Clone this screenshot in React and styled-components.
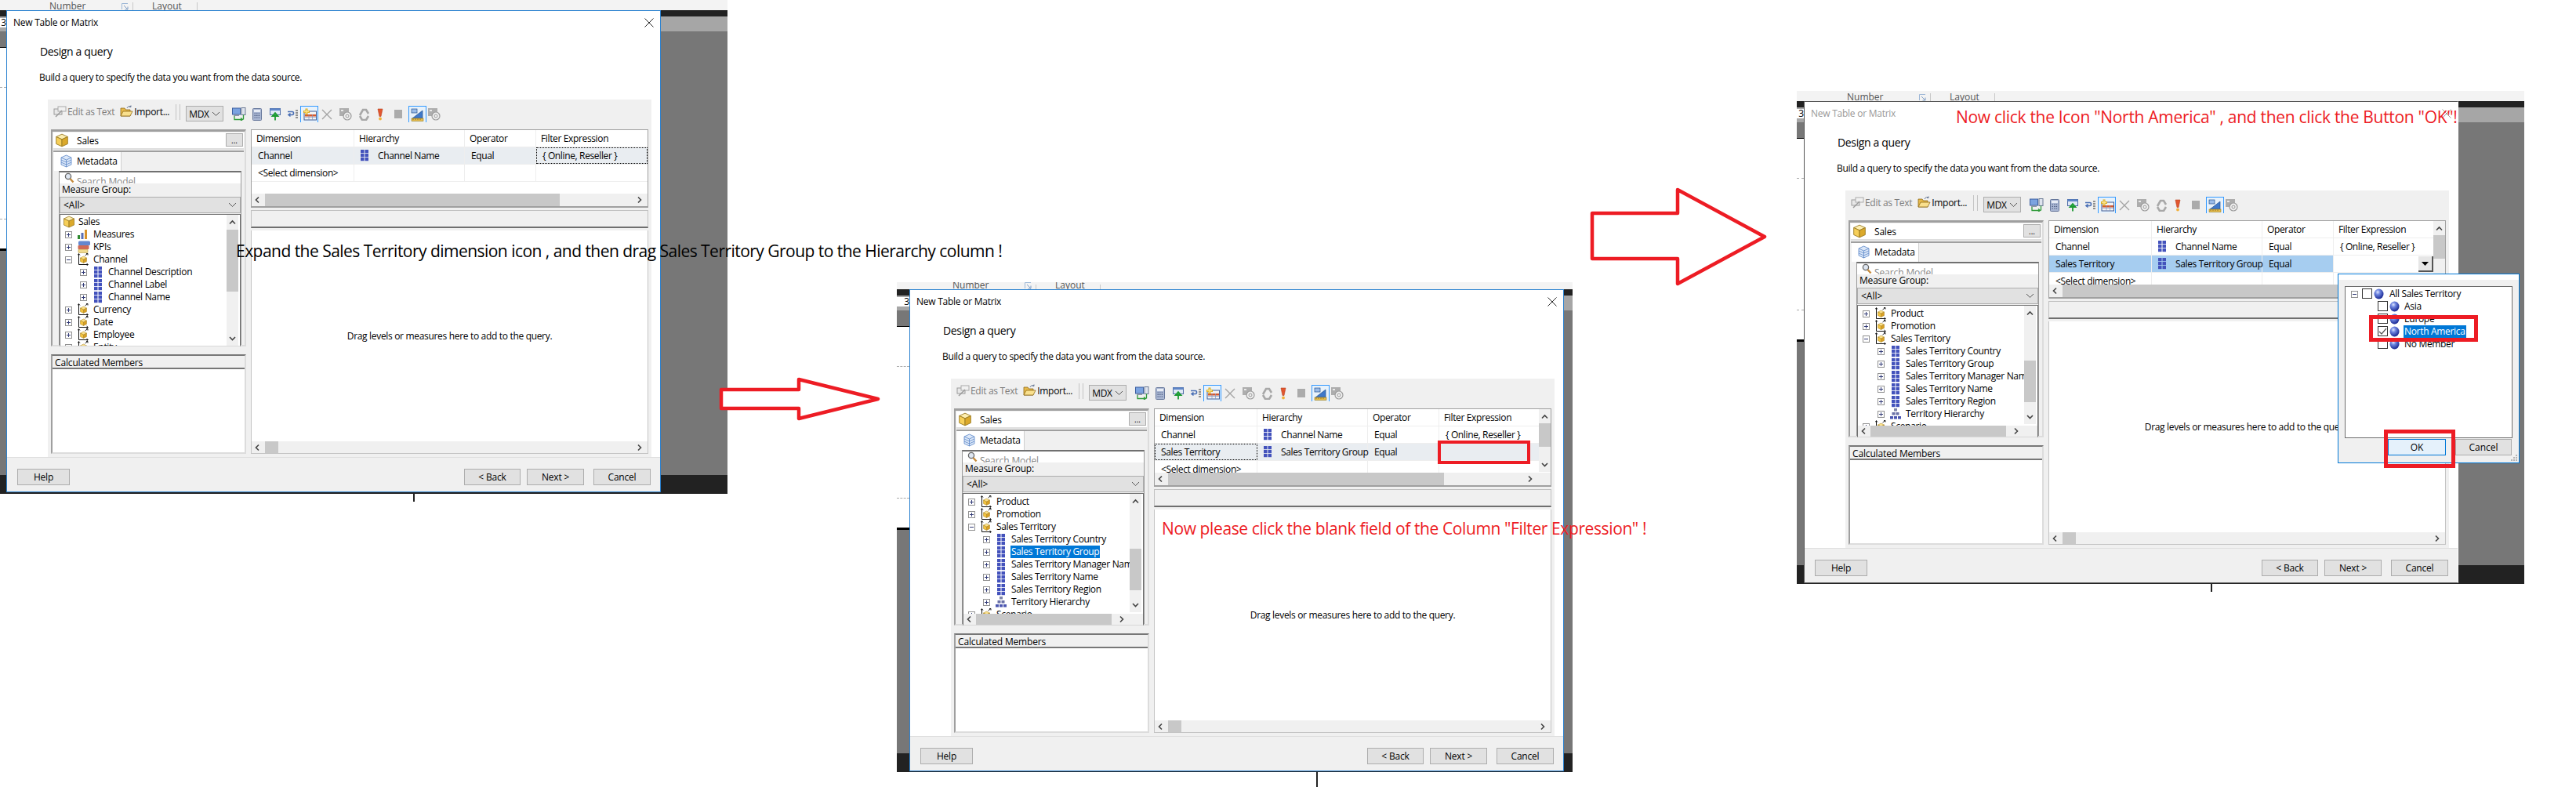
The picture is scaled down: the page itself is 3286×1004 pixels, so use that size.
import React, { useId } from 'react';
import styled, { createGlobalStyle } from 'styled-components';

const Global = createGlobalStyle`
  html, body { margin: 0; padding: 0; background: #fff; }
  body { font-family: "Open Sans", "Noto Sans", sans-serif; font-size: 12px; color: #000; }
`;

const Page = styled.div`
  position: relative;
  width: 3286px;
  height: 1004px;
  overflow: hidden;
  background: #fff;
`;

/* ---------- backdrop of each pasted screenshot ---------- */
const Shot = styled.section`
  position: absolute;
  left: ${p => p.$x}px;
  top: ${p => p.$y}px;
  width: ${p => p.$w}px;
  height: ${p => p.$h}px;
  display: flex;
  flex-direction: column;
`;
const Ribbon = styled.div`
  height: ${p => p.$h}px;
  flex: none;
  background: #f3f3f3;
  display: flex;
  align-items: flex-end;
  overflow: hidden;
  padding-left: ${p => p.$pad}px;
  font-size: 12px;
  line-height: 17px;
  color: #555;
`;
const RibbonCell = styled.div`
  position: relative;
  width: ${p => p.$w}px;
  height: 100%;
  flex: none;
  border-right: 1px solid #c8c8c8;
  box-sizing: border-box;
  padding-left: ${p => p.$pad}px;
  display: flex;
  align-items: flex-end;
  margin-bottom: -3px;
`;
const Launcher = styled.span`
  position: absolute;
  right: 5px;
  bottom: 3px;
  line-height: 0;
`;
const Workspace = styled.div`
  flex: 1;
  display: flex;
  flex-direction: column;
`;
const Band = styled.div`
  height: ${p => p.$h}px;
  flex: ${p => (p.$h ? 'none' : 1)};
  background: ${p => p.$c};
`;
const Stub = styled.div`
  position: absolute;
  left: 0;
  width: ${p => p.$w}px;
  top: ${p => p.$top}px;
  height: 260px;
  background: #fff;
  border-top: 1px solid #000;
  border-bottom: 3px solid #000;
  box-sizing: border-box;
  &::before, &::after {
    content: '';
    position: absolute;
    left: 0;
    right: 0;
    border-top: 1px dashed #aaa;
  }
  &::before { top: 50px; }
  &::after { top: 218px; }
`;
const SheetTab = styled.div`
  position: absolute;
  left: 0;
  top: ${p => p.$top}px;
  width: ${p => p.$w}px;
  height: 12px;
  background: #fff;
  overflow: hidden;
  display: flex;
  justify-content: flex-end;
  font-size: 12px;
  line-height: 12px;
`;
const Tail = styled.div`
  position: absolute;
  top: 100%;
  left: ${p => p.$x}px;
  width: 2px;
  height: ${p => p.$h}px;
  background: #222;
`;

/* ---------- dialog ---------- */
const Dialog = styled.div`
  position: absolute;
  left: ${p => p.$x}px;
  top: ${p => p.$y}px;
  width: 835px;
  height: 615px;
  box-sizing: border-box;
  background: #fff;
  border: 1px solid ${p => (p.$active ? '#2b82d0' : '#555')};
  border-right-color: ${p => (p.$active ? '#2b82d0' : '#fff')};
  display: flex;
  flex-direction: column;
`;
const TitleBar = styled.div`
  height: 29px;
  flex: none;
  display: flex;
  align-items: center;
  justify-content: space-between;
  padding: 0 8px 0 8px;
  color: ${p => (p.$active ? '#000' : '#999')};
`;
const Title = styled.span`
  letter-spacing: -0.25px;
`;
const Heading = styled.div`
  height: 84px;
  flex: none;
  padding-left: 42px;
  display: flex;
  flex-direction: column;
`;
const DesignTitle = styled.div`
  font-size: 14px;
  line-height: 20px;
  margin-top: 13px;
  letter-spacing: -0.35px;
`;
const DesignSub = styled.div`
  margin-top: 15px;
  line-height: 16px;
  margin-left: -1px;
  letter-spacing: -0.36px;
`;
const Panel = styled.div`
  height: 456px;
  flex: none;
  margin: 0 11px 0 52px;
  background: #f0f0f0;
  padding: 0 4px;
  box-sizing: border-box;
  display: flex;
  flex-direction: column;
`;
const Toolbar = styled.div`
  height: 38px;
  flex: none;
  display: flex;
  align-items: flex-start;
  position: relative;
  font-size: 12px;
`;
const TbText = styled.div`
  display: flex;
  align-items: center;
  gap: 1px;
  height: 18px;
  margin-top: 6px;
  color: ${p => (p.$off ? '#7d7d7d' : '#000')};
  margin-left: ${p => p.$ml || 0}px;
  letter-spacing: -0.3px;
`;
const TbSep = styled.div`
  width: 4px;
  height: 20px;
  margin: 6px 7px 0 8px;
  border-left: 1px solid #c4c4c4;
  border-right: 1px solid #c4c4c4;
`;
const MdxCombo = styled.div`
  width: 48px;
  height: 20px;
  margin-top: 8px;
  background: #e1e1e1;
  border: 1px solid #adadad;
  box-sizing: border-box;
  display: flex;
  align-items: center;
  justify-content: space-between;
  padding: 0 3px 0 3px;
  letter-spacing: -0.3px;
`;
const TbIcons = styled.div`
  display: flex;
  align-items: flex-start;
  margin-left: 8px;
  margin-top: 8px;
`;
const TbBtn = styled.div`
  width: ${p => p.$w || 23}px;
  height: 21px;
  flex: none;
  box-sizing: border-box;
  display: flex;
  align-items: center;
  justify-content: center;
  ${p => p.$on && 'border: 1px solid #3399ff; border-bottom: none; background: #e8f2fb;'}
`;

const Body = styled.div`
  flex: 1;
  display: grid;
  grid-template-columns: 249px 507px;
  column-gap: 6px;
  padding-bottom: 4px;
  min-height: 0;
`;
const LeftCol = styled.div`
  display: flex;
  flex-direction: column;
  gap: 10px;
  min-height: 0;
`;
const RightCol = styled.div`
  display: flex;
  flex-direction: column;
  gap: 3px;
  min-height: 0;
`;

/* left */
const ModelFrame = styled.div`
  height: 277px;
  flex: none;
  box-sizing: border-box;
  border-top: 3px solid #9f9f9f;
  border-left: 2px solid #9f9f9f;
  border-right: 2px solid #dcdcdc;
  border-bottom: 2px solid #dcdcdc;
  padding: 1px 1px 0 1px;
  display: flex;
  flex-direction: column;
`;
const CubeRow = styled.div`
  height: 20px;
  flex: none;
  background: #fff;
  display: flex;
  align-items: center;
  padding-left: 2px;
  position: relative;
  border-bottom: 2px solid #dedede;
`;
const CubeName = styled.span`
  margin-left: 10px;
  letter-spacing: -0.2px;
`;
const DotsBtn = styled.div`
  position: absolute;
  right: 1px;
  top: 1px;
  width: 22px;
  height: 17px;
  background: #e1e1e1;
  border: 1px solid #adadad;
  box-sizing: border-box;
  display: flex;
  align-items: flex-end;
  justify-content: center;
  font-size: 10px;
  line-height: 13px;
`;
const TabStrip = styled.div`
  height: 24px;
  flex: none;
  margin-top: 1px;
  border-top: 2px solid #9f9f9f;
  padding-left: 1px;
  display: flex;
`;
const Tab = styled.div`
  width: 86px;
  background: #fff;
  display: flex;
  align-items: center;
  gap: 6px;
  padding: 0 0 2px 8px;
  box-sizing: border-box;
  letter-spacing: -0.2px;
  border-right: 1px solid #cfcfcf;
`;
const TabBody = styled.div`
  flex: 1;
  min-height: 0;
  margin: 0 3px 0 7px;
  display: flex;
  flex-direction: column;
  border-top: 2px solid #707070;
  border-left: 1px solid #999;
  border-right: 1px solid #999;
  padding: 0;
`;
const SearchBox = styled.div`
  height: 14px;
  flex: none;
  background: #fff;
  overflow: hidden;
  display: flex;
  align-items: flex-start;
  padding-left: 6px;
  gap: 3px;
  color: #888;
  line-height: 23px;
  letter-spacing: -0.1px;
`;
const GroupLabel = styled.div`
  height: 17px;
  flex: none;
  background: #f0f0f0;
  line-height: 16px;
  padding-left: 3px;
  letter-spacing: -0.2px;
`;
const GroupCombo = styled.div`
  height: 21px;
  flex: none;
  box-sizing: border-box;
  background: #e1e1e1;
  border: 1px solid #adadad;
  display: flex;
  align-items: center;
  justify-content: space-between;
  padding: 0 4px;
`;
const Tree = styled.div`
  position: relative;
  height: 169px;
  flex: none;
  margin-top: 1px;
  box-sizing: border-box;
  background: #fff;
  border: 1px solid #6f6f6f;
  border-bottom-color: #d8d8d8;
  overflow: hidden;
  padding-top: ${p => p.$pad}px;
`;
const TreeRow = styled.div`
  height: 16px;
  display: flex;
  align-items: center;
  white-space: nowrap;
  position: relative;
  padding-left: ${p => p.$indent}px;
`;
const TreeLabel = styled.span`
  position: absolute;
  left: ${p => p.$left}px;
  line-height: 16px;
  padding: 0 1px;
  letter-spacing: -0.32px;
  ${p => p.$sel && 'background: #0078d7; color: #fff;'}
`;
const Expander = styled.span`
  display: block;
  width: 9px;
  height: 9px;
  flex: none;
  box-sizing: border-box;
  border: 1px solid #919191;
  background: #fff;
  position: relative;
  &::before {
    content: '';
    position: absolute;
    left: 1px; right: 1px; top: 3px;
    height: 1px;
    background: #333c78;
  }
  &::after {
    content: '';
    display: ${p => (p.$open ? 'none' : 'block')};
    position: absolute;
    top: 1px; bottom: 1px; left: 3px;
    width: 1px;
    background: #333c78;
  }
`;
const IconSlot = styled.span`
  position: absolute;
  left: ${p => p.$left}px;
  top: 0;
  height: 16px;
  display: flex;
  align-items: center;
`;
const VScroll = styled.div`
  position: absolute;
  right: ${p => p.$right ?? 2}px;
  top: 0;
  bottom: ${p => p.$bottom}px;
  width: 15px;
  background: #f0f0f0;
  display: flex;
  flex-direction: column;
  align-items: center;
`;
const VArrow = styled.div`
  position: absolute;
  ${p => (p.$down ? 'bottom: 4px;' : 'top: 6px;')}
  left: 3px;
  line-height: 0;
`;
const VThumb = styled.div`
  position: absolute;
  left: 0;
  right: 0;
  top: ${p => p.$top}px;
  height: ${p => p.$h}px;
  background: #c8c8c8;
`;
const HScroll = styled.div`
  position: absolute;
  left: 0;
  right: 0;
  bottom: 0;
  height: ${p => p.$h || 14}px;
  background: #f0f0f0;
`;
const HThumb = styled.div`
  position: absolute;
  left: ${p => p.$left}px;
  width: ${p => p.$w}px;
  top: 0;
  bottom: 0;
  background: #c8c8c8;
`;
const HArrow = styled.div`
  position: absolute;
  top: 50%;
  transform: translateY(-50%);
  ${p => (p.$right !== undefined ? `right: ${p.$right}px;` : `left: ${p.$left}px;`)}
  line-height: 0;
`;

const CalcFrame = styled.div`
  flex: 1;
  min-height: 0;
  border-top: 2px solid #777;
  border-left: 2px solid #9f9f9f;
  border-right: 2px solid #dcdcdc;
  border-bottom: 2px solid #dcdcdc;
  display: flex;
  flex-direction: column;
`;
const CalcHead = styled.div`
  height: 15px;
  flex: none;
  line-height: 17px;
  padding-left: 3px;
  background: #f0f0f0;
  letter-spacing: -0.15px;
  border-bottom: 2px solid #777;
`;
const CalcBody = styled.div`
  flex: 1;
  background: #fff;
`;

/* right */
const TableFrame = styled.div`
  position: relative;
  height: 100px;
  flex: none;
  box-sizing: border-box;
  border: 1px solid #a0a0a0;
  border-bottom-width: 2px;
  background: #fff;
  overflow: hidden;
`;
const TableRow = styled.div`
  display: grid;
  grid-template-columns: 131px 141px 91px ${p => (p.$scroll ? '128px' : '142px')};
  height: ${p => (p.$head ? 22 : 22)}px;
  box-sizing: border-box;
  border-bottom: 1px solid #eee;
  background: ${p => (p.$bg ? p.$bg : '#fff')};
`;
const Cell = styled.div`
  display: flex;
  align-items: center;
  box-sizing: border-box;
  border-right: 1px solid ${p => (p.$last ? 'transparent' : '#eee')};
  padding-left: ${p => (p.$head ? 6 : 8)}px;
  white-space: nowrap;
  letter-spacing: -0.36px;
  position: relative;
  min-width: 0;
  ${p => p.$dot && 'outline: 1px dotted #000; outline-offset: -1px;'}
  ${p => p.$fill && `background: ${p.$fill};`}
  & > svg { flex: none; }
`;
const HierName = styled.span`
  margin-left: 12px;
`;
const CellDrop = styled.div`
  position: absolute;
  right: 0;
  top: 1px;
  bottom: 0;
  width: 19px;
  background: #e6e6e6;
  border-right: 2px solid #555;
  border-bottom: 2px solid #555;
  box-sizing: border-box;
  display: flex;
  align-items: center;
  justify-content: center;
`;
const GroupBar = styled.div`
  height: 23px;
  flex: none;
  box-sizing: border-box;
  background: #f0f0f0;
  border: 1px solid #c0c0c0;
  border-bottom: 2px solid #6f6f6f;
`;
const DropArea = styled.div`
  position: relative;
  flex: 1;
  min-height: 0;
  background: #fff;
  border: 1px solid #c4c4c4;
  border-top: none;
  box-sizing: border-box;
  display: flex;
  align-items: center;
  justify-content: center;
  padding-bottom: 15px;
  letter-spacing: -0.32px;
  overflow: hidden;
`;
const Footer = styled.div`
  flex: 1;
  background: #f0f0f0;
  border-top: 1px solid #dfdfdf;
  display: flex;
  align-items: flex-start;
  padding: 14px 12px 0 13px;
  gap: 8px;
`;
const Button = styled.div`
  width: ${p => p.$w}px;
  height: 21px;
  box-sizing: border-box;
  background: #e1e1e1;
  border: 1px solid #adadad;
  display: flex;
  align-items: center;
  justify-content: center;
  letter-spacing: -0.2px;
  ${p => p.$push && 'margin-left: auto;'}
  ${p => p.$ml && `margin-left: ${p.$ml}px;`}
`;

/* popup */
const Popup = styled.div`
  position: absolute;
  left: 680px;
  top: 219px;
  width: 232px;
  height: 242px;
  box-sizing: border-box;
  background: #f0f0f0;
  border: 1px solid #0078d7;
  border-top-width: 1px;
`;
const PopupStrip = styled.div`
  height: 7px;
  background: #fff;
`;
const PopupTree = styled.div`
  position: absolute;
  left: 8px;
  right: 8px;
  top: 15px;
  height: 194px;
  background: #fff;
  border: 1px solid #6d6d6d;
  box-sizing: border-box;
  padding-top: 1px;
`;
const PopupRow = styled.div`
  height: 16px;
  position: relative;
  display: flex;
  align-items: center;
  padding-left: ${p => (p.$exp ? 7 : 0)}px;
`;
const Check = styled.span`
  position: absolute;
  left: ${p => p.$left}px;
  top: 1px;
  width: 13px;
  height: 13px;
  box-sizing: border-box;
  border: 1px solid #333;
  background: #fff;
  line-height: 0;
`;
const PopupBtn = styled.div`
  position: absolute;
  top: 210px;
  left: ${p => p.$x}px;
  width: ${p => p.$w}px;
  height: 21px;
  box-sizing: border-box;
  display: flex;
  align-items: center;
  justify-content: center;
  background: ${p => (p.$on ? '#e5f1fb' : '#e1e1e1')};
  border: 1px solid ${p => (p.$on ? '#0078d7' : '#adadad')};
`;
const Grip = styled.div`
  position: absolute;
  right: 1px;
  bottom: 1px;
  line-height: 0;
`;

/* annotations */
const RedBox = styled.div`
  position: absolute;
  left: ${p => p.$x}px;
  top: ${p => p.$y}px;
  width: ${p => p.$w}px;
  height: ${p => p.$h}px;
  box-sizing: border-box;
  border: ${p => p.$b}px solid #ed1c24;
  pointer-events: none;
`;
const Caption = styled.div`
  position: absolute;
  left: ${p => p.$x}px;
  top: ${p => p.$y}px;
  font-size: ${p => p.$size}px;
  line-height: 30px;
  white-space: nowrap;
  letter-spacing: ${p => p.$ls}px;
  color: ${p => p.$c};
`;
const ArrowMark = styled.svg`
  position: absolute;
  left: ${p => p.$x}px;
  top: ${p => p.$y}px;
  overflow: visible;
`;

/* ---------- drawings ---------- */
const Chev = ({ d }) => {
  const paths = {
    l: 'M5 1 L1.5 4.5 L5 8',
    r: 'M2 1 L5.5 4.5 L2 8',
    u: 'M1 5.5 L4.5 2 L8 5.5',
    d: 'M1 2 L4.5 5.5 L8 2',
  };
  return (
    <svg width="9" height="9" viewBox="0 0 9 9">
      <path d={paths[d]} fill="none" stroke="#444" strokeWidth="1.6" />
    </svg>
  );
};
const ComboChev = () => (
  <svg width="11" height="7" viewBox="0 0 11 7">
    <path d="M1 1 L5.5 5.5 L10 1" fill="none" stroke="#555" strokeWidth="1" />
  </svg>
);
const LauncherIcon = () => (
  <svg width="9" height="9" viewBox="0 0 9 9">
    <path d="M.5 8 V.5 H8" fill="none" stroke="#9db7d6" />
    <path d="M3 3 L8 8 M8 4.5 V8 H4.5" fill="none" stroke="#7f9dc4" />
  </svg>
);
const Cube = ({ s = 16 }) => (
  <svg width={s} height={s} viewBox="0 0 16 16">
    <path d="M8 1 L14.5 4 L8 7 L1.5 4 Z" fill="#fdeeb0" stroke="#9a7a22" strokeWidth=".8" />
    <path d="M1.5 4 L8 7 V15 L1.5 12 Z" fill="#f6cf5a" stroke="#9a7a22" strokeWidth=".8" />
    <path d="M14.5 4 L8 7 V15 L14.5 12 Z" fill="#dba92b" stroke="#9a7a22" strokeWidth=".8" />
  </svg>
);
const DimIcon = () => (
  <svg width="14" height="16" viewBox="0 0 14 16">
    <path d="M1.5 1 V14.5 H13" fill="none" stroke="#111" strokeWidth="1" />
    <path d="M0 2.5 L1.5 .5 L3 2.5 M11.5 13 L13.5 14.5 L11.5 16 M9.5 3 L13 .5 M11 .5 H13 V2.5" fill="none" stroke="#111" strokeWidth=".9" />
    <path d="M7.5 4 L11.5 6 L7.5 8 L3.5 6 Z" fill="#fbe08a" stroke="#a98420" strokeWidth=".5" />
    <path d="M3.5 6 L7.5 8 V12.5 L3.5 10.5 Z" fill="#f3c33f" stroke="#a98420" strokeWidth=".5" />
    <path d="M11.5 6 L7.5 8 V12.5 L11.5 10.5 Z" fill="#d99f23" stroke="#a98420" strokeWidth=".5" />
  </svg>
);
const GridIcon = () => (
  <svg width="10" height="15" viewBox="0 0 10 15">
    {[0, 5, 10].map(y => [0, 5.5].map(x => (
      <rect key={`${x}-${y}`} x={x} y={y} width="4.5" height="4.2" fill="#4352bc" />
    )))}
  </svg>
);
const HierIcon = () => (
  <svg width="14" height="14" viewBox="0 0 14 14">
    <rect x="5" y="0" width="4" height="3.5" fill="#7e84a8" />
    <rect x="2.5" y="5" width="4" height="3.5" fill="#6a71a6" />
    <rect x="7.5" y="5" width="4" height="3.5" fill="#6a71a6" />
    <rect x="0" y="10" width="4" height="3.5" fill="#4a55b0" />
    <rect x="5" y="10" width="4" height="3.5" fill="#4a55b0" />
    <rect x="10" y="10" width="4" height="3.5" fill="#4a55b0" />
  </svg>
);
const BarsIcon = () => (
  <svg width="12" height="12" viewBox="0 0 12 12">
    <rect x="0" y="7" width="3" height="5" fill="#2f8a2f" />
    <rect x="4.5" y="4" width="3" height="8" fill="#5a6fb5" />
    <rect x="9" y="0" width="3" height="12" fill="#d9932a" />
  </svg>
);
const KpiIcon = () => (
  <svg width="16" height="16" viewBox="0 0 16 16">
    <rect x="1" y="11" width="12" height="4.5" rx="1" fill="#f0d98c" stroke="#b69a45" strokeWidth=".6" />
    <rect x="0.5" y="6" width="14" height="5" rx="1" fill="#cf6a55" />
    <rect x="1" y="0.5" width="15" height="5.5" rx="1.5" fill="#6387cf" />
  </svg>
);
const MetaIcon = () => (
  <svg width="15" height="17" viewBox="0 0 15 17">
    <path d="M7.5 1 L14 4 V13 L7.5 16 L1 13 V4 Z" fill="#dbe7f8" stroke="#5a86c8" strokeWidth=".8" />
    <path d="M1 4 L7.5 7 L14 4 M1 7 L7.5 10 L14 7 M1 10 L7.5 13 L14 10 M7.5 7 V16" fill="none" stroke="#5a86c8" strokeWidth=".8" />
  </svg>
);
const Globe = () => {
  const id = useId();
  return (
    <svg width="13" height="14" viewBox="0 0 13 14">
      <defs>
        <radialGradient id={id} cx="38%" cy="32%" r="70%">
          <stop offset="0%" stopColor="#dfe6ff" />
          <stop offset="35%" stopColor="#6f86e0" />
          <stop offset="100%" stopColor="#15238f" />
        </radialGradient>
      </defs>
      <ellipse cx="6.5" cy="7" rx="6" ry="6.5" fill={`url(#${id})`} />
    </svg>
  );
};
const Magnifier = () => (
  <svg width="13" height="14" viewBox="0 0 13 14">
    <circle cx="5" cy="5" r="3.6" fill="#dfe7f2" stroke="#666" strokeWidth="1.3" />
    <path d="M7.5 8 L11.5 12.5" stroke="#c58a3a" strokeWidth="2.4" />
  </svg>
);
const EditIcon = () => (
  <svg width="17" height="16" viewBox="0 0 17 16">
    <rect x="1" y="5" width="10" height="7" fill="#e8e8e8" stroke="#999" />
    <rect x="6" y="2" width="10" height="6" fill="#f1f1f1" stroke="#aaa" />
    <path d="M3 15 L11 7" stroke="#999" strokeWidth="1.5" />
  </svg>
);
const FolderIcon = () => (
  <svg width="17" height="16" viewBox="0 0 17 16">
    <path d="M1 14 V4 H6 L7.5 6 H13 V14 Z" fill="#e6b94a" stroke="#8f6b17" strokeWidth=".8" />
    <path d="M1 14 L4 8 H16 L13 14 Z" fill="#f9e08e" stroke="#8f6b17" strokeWidth=".8" />
    <path d="M9 4 C10 1.5 12.5 1 14 2 M14 .5 V2.5 H12" fill="none" stroke="#5b6e8d" strokeWidth=".9" />
  </svg>
);
const ServerIcon = () => (
  <svg width="18" height="17" viewBox="0 0 18 17">
    <rect x="0.5" y="1" width="10" height="8" fill="#7ba3e0" stroke="#3c5fa0" />
    <rect x="2" y="9" width="7" height="2" fill="#8b95a8" />
    <rect x="12" y="0.5" width="5" height="9" fill="#dfe4ee" stroke="#6c7a94" />
    <path d="M3 11 V15.5 H13 M11 13.5 L13.5 15.5 L11 17 M14.5 9.5 V15.5" fill="none" stroke="#2f9a3a" strokeWidth="1.3" />
  </svg>
);
const CalcIcon = () => (
  <svg width="12" height="16" viewBox="0 0 12 16">
    <rect x="0.5" y="0.5" width="11" height="15" rx="1" fill="#a9b6d2" stroke="#66779b" />
    <rect x="2" y="2" width="8" height="3" fill="#e7ecf5" />
    <path d="M2.5 7 H9.5 M2.5 9.5 H9.5 M2.5 12 H9.5" stroke="#48587f" strokeWidth="1.2" strokeDasharray="1.4 1.2" />
  </svg>
);
const ArrowTableIcon = () => (
  <svg width="14" height="16" viewBox="0 0 14 16">
    <rect x="0.5" y="0.5" width="13" height="8" fill="#dfe8f6" stroke="#4f6ea8" />
    <rect x="0.5" y="0.5" width="13" height="2.5" fill="#5f86c8" />
    <path d="M7 15.5 V9 M3.5 10 H10.5 L7 6 Z" stroke="#1d9a33" fill="#34b04b" strokeWidth="1.8" />
  </svg>
);
const ListArrowIcon = () => (
  <svg width="14" height="13" viewBox="0 0 14 13">
    <path d="M1 3.5 H7 C9 3.5 9 7.5 7 7.5 H3 M4.5 5.5 L2 7.5 L4.5 9.5" fill="none" stroke="#4a6fb5" strokeWidth="1.6" />
    <path d="M11 2 H14 M11 5 H14 M11 8 H14 M11 11 H14" stroke="#333" strokeWidth="1.2" />
  </svg>
);
const AddTableIcon = () => (
  <svg width="18" height="16" viewBox="0 0 18 16">
    <rect x="2" y="4" width="15.5" height="11" fill="#f3f3f3" stroke="#3e5c97" />
    <rect x="3" y="8" width="14" height="2.5" fill="#d6592f" />
    <path d="M3 11.5 H17 M8 8 V15 M12.5 8 V15" stroke="#7f94bf" strokeWidth=".7" />
    <path d="M5 .5 V8.5 M1 4.5 H9" stroke="#d8a91f" strokeWidth="3" />
    <path d="M5 1.5 V7.5 M2 4.5 H8" stroke="#fbe690" strokeWidth="1.3" />
  </svg>
);
const GreyX = () => (
  <svg width="14" height="14" viewBox="0 0 14 14">
    <path d="M1 1 L13 13 M13 1 L1 13" stroke="#a2a2a2" strokeWidth="1.3" />
  </svg>
);
const GreyAt = () => (
  <svg width="17" height="17" viewBox="0 0 17 17">
    <rect x="1" y="1" width="12" height="10" fill="#adadad" />
    <rect x="3" y="3" width="3" height="2" fill="#e9e9e9" />
    <circle cx="11" cy="11" r="5" fill="#f0f0f0" stroke="#9a9a9a" strokeWidth="1.2" />
    <circle cx="11" cy="11" r="2" fill="none" stroke="#9a9a9a" />
  </svg>
);
const GreyRecycle = () => (
  <svg width="15" height="16" viewBox="0 0 15 16">
    <path d="M2 9 L6 2 H10 L13 7 M13 10 L10 15 H5 L2 10" fill="none" stroke="#a8a8a8" strokeWidth="2.6" />
  </svg>
);
const Bang = () => (
  <svg width="8" height="16" viewBox="0 0 8 16">
    <path d="M1 1 H7 L5 10.5 H3 Z" fill="#e2562f" stroke="#b8401d" strokeWidth=".6" />
    <circle cx="4" cy="13.5" r="1.9" fill="#f2b13d" />
  </svg>
);
const Stop = () => <svg width="10" height="11" viewBox="0 0 10 11"><rect width="10" height="11" fill="#ababab" /></svg>;
const RulerIcon = () => (
  <svg width="17" height="17" viewBox="0 0 17 17">
    <path d="M15 3 V13 H2 Z" fill="#3f78c8" stroke="#25538f" strokeWidth=".7" />
    <rect x="1" y="1" width="7" height="5" fill="#9bbce8" stroke="#25538f" strokeWidth=".7" />
    <rect x="1" y="13" width="15" height="3.5" fill="#e5bd4f" stroke="#9b7a1d" strokeWidth=".6" />
    <path d="M3 13.5 V15 M6 13.5 V15 M9 13.5 V15 M12 13.5 V15" stroke="#7a5c10" strokeWidth=".7" />
  </svg>
);
const CloseX = ({ c }) => (
  <svg width="12" height="12" viewBox="0 0 12 12">
    <path d="M.5 .5 L11.5 11.5 M11.5 .5 L.5 11.5" stroke={c} strokeWidth="1" />
  </svg>
);
const Tick = () => (
  <svg width="11" height="11" viewBox="0 0 11 11">
    <path d="M1 6 L4 9 L10 2" fill="none" stroke="#555" strokeWidth="1.2" />
  </svg>
);
const DownTri = () => (
  <svg width="9" height="5" viewBox="0 0 9 5"><path d="M0 0 H9 L4.5 5 Z" fill="#000" /></svg>
);
const GripDots = () => (
  <svg width="10" height="10" viewBox="0 0 10 10" fill="#b5b5b5">
    <rect x="7" y="1" width="2" height="2" />
    <rect x="4" y="4" width="2" height="2" /><rect x="7" y="4" width="2" height="2" />
    <rect x="1" y="7" width="2" height="2" /><rect x="4" y="7" width="2" height="2" /><rect x="7" y="7" width="2" height="2" />
  </svg>
);

const ICONS = { cube: <Cube />, dim: <DimIcon />, grid: <GridIcon />, hier: <HierIcon />, bars: <BarsIcon />, kpi: <KpiIcon /> };

/* ---------- data ---------- */
const TREE_A = [
  { t: 'Sales', icon: 'cube', root: true },
  { t: 'Measures', icon: 'bars', exp: 1 },
  { t: 'KPIs', icon: 'kpi', exp: 1 },
  { t: 'Channel', icon: 'dim', exp: 1, open: true },
  { t: 'Channel Description', icon: 'grid', exp: 2 },
  { t: 'Channel Label', icon: 'grid', exp: 2 },
  { t: 'Channel Name', icon: 'grid', exp: 2 },
  { t: 'Currency', icon: 'dim', exp: 1 },
  { t: 'Date', icon: 'dim', exp: 1 },
  { t: 'Employee', icon: 'dim', exp: 1 },
  { t: 'Entity', icon: 'dim', exp: 1 },
];
const treeB = sel => [
  { t: 'Product', icon: 'dim', exp: 1 },
  { t: 'Promotion', icon: 'dim', exp: 1 },
  { t: 'Sales Territory', icon: 'dim', exp: 1, open: true },
  { t: 'Sales Territory Country', icon: 'grid', exp: 2 },
  { t: 'Sales Territory Group', icon: 'grid', exp: 2, sel },
  { t: 'Sales Territory Manager Name', icon: 'grid', exp: 2 },
  { t: 'Sales Territory Name', icon: 'grid', exp: 2 },
  { t: 'Sales Territory Region', icon: 'grid', exp: 2 },
  { t: 'Territory Hierarchy', icon: 'hier', exp: 2 },
  { t: 'Scenario', icon: 'dim', exp: 1 },
];

/* ---------- composite parts ---------- */
const TreeItem = ({ r }) => {
  if (r.root) {
    return (
      <TreeRow $indent={0}>
        <IconSlot $left={3}>{ICONS[r.icon]}</IconSlot>
        <TreeLabel $left={22}>{r.t}</TreeLabel>
      </TreeRow>
    );
  }
  const base = r.exp === 1 ? 6 : 25;
  const iconLeft = r.exp === 1 ? 22 : r.icon === 'hier' ? 41 : 43;
  const textLeft = r.exp === 1 ? 41 : 60;
  return (
    <TreeRow $indent={base}>
      <Expander $open={r.open} />
      <IconSlot $left={iconLeft}>{ICONS[r.icon]}</IconSlot>
      <TreeLabel $left={textLeft} $sel={r.sel}>{r.t}</TreeLabel>
    </TreeRow>
  );
};

const MainToolbar = () => (
  <Toolbar>
    <TbText $off $ml={3}><EditIcon /><span>Edit as Text</span></TbText>
    <TbText $ml={7}><FolderIcon /><span>Import...</span></TbText>
    <TbSep />
    <MdxCombo>MDX<ComboChev /></MdxCombo>
    <TbIcons>
      <TbBtn><ServerIcon /></TbBtn>
      <TbBtn><CalcIcon /></TbBtn>
      <TbBtn><ArrowTableIcon /></TbBtn>
      <TbBtn $w={21}><ListArrowIcon /></TbBtn>
      <TbBtn $on><AddTableIcon /></TbBtn>
      <TbBtn $w={22}><GreyX /></TbBtn>
      <TbBtn $w={24}><GreyAt /></TbBtn>
      <TbBtn $w={24}><GreyRecycle /></TbBtn>
      <TbBtn $w={18}><Bang /></TbBtn>
      <TbBtn $w={27}><Stop /></TbBtn>
      <TbBtn $on><RulerIcon /></TbBtn>
      <TbBtn $w={19}><GreyAt /></TbBtn>
    </TbIcons>
  </Toolbar>
);

const ModelPane = ({ rows, rootPad, thumb, hBar }) => (
  <LeftCol>
    <ModelFrame>
      <CubeRow>
        <Cube s={18} />
        <CubeName>Sales</CubeName>
        <DotsBtn>...</DotsBtn>
      </CubeRow>
      <TabStrip><Tab><MetaIcon />Metadata</Tab></TabStrip>
      <TabBody>
        <SearchBox><Magnifier /><span>Search Model</span></SearchBox>
        <GroupLabel>Measure Group:</GroupLabel>
        <GroupCombo><span>&lt;All&gt;</span><ComboChev /></GroupCombo>
        <Tree $pad={rootPad}>
          {rows.map(r => <TreeItem key={r.t} r={r} />)}
          <VScroll $bottom={hBar ? 16 : 0}>
            <VArrow><Chev d="u" /></VArrow>
            <VThumb $top={thumb[0]} $h={thumb[1]} />
            <VArrow $down><Chev d="d" /></VArrow>
          </VScroll>
          {hBar && (
            <HScroll>
              <HArrow $left={4}><Chev d="l" /></HArrow>
              <HThumb $left={16} $w={173} />
              <HArrow $right={22}><Chev d="r" /></HArrow>
            </HScroll>
          )}
        </Tree>
      </TabBody>
    </ModelFrame>
    <CalcFrame>
      <CalcHead>Calculated Members</CalcHead>
      <CalcBody />
    </CalcFrame>
  </LeftCol>
);

const ResultPane = ({ rows, scroll, thumbW, arrowRight }) => (
  <RightCol>
    <TableFrame>
      <TableRow $head $scroll={scroll}>
        <Cell $head>Dimension</Cell>
        <Cell $head>Hierarchy</Cell>
        <Cell $head>Operator</Cell>
        <Cell $head $last>Filter Expression</Cell>
      </TableRow>
      {rows.map(r => (
        <TableRow key={r.dim} $scroll={scroll} $bg={r.bg}>
          <Cell $dot={r.dotDim}>{r.dim}</Cell>
          <Cell>{r.hier && <><GridIcon /><HierName>{r.hier}</HierName></>}</Cell>
          <Cell>{r.op}</Cell>
          <Cell $last $dot={r.dotFilter} $fill={r.edit ? '#fff' : undefined}>
            {r.filter}
            {r.edit && <CellDrop><DownTri /></CellDrop>}
          </Cell>
        </TableRow>
      ))}
      {scroll && (
        <VScroll $bottom={17} $right={0}>
          <VArrow><Chev d="u" /></VArrow>
          <VThumb $top={18} $h={30} />
          <VArrow $down><Chev d="d" /></VArrow>
        </VScroll>
      )}
      <HScroll $h={16}>
        <HArrow $left={4}><Chev d="l" /></HArrow>
        <HThumb $left={17} $w={thumbW} />
        <HArrow $right={arrowRight}><Chev d="r" /></HArrow>
      </HScroll>
    </TableFrame>
    <GroupBar />
    <DropArea>
      Drag levels or measures here to add to the query.
      <HScroll $h={15}>
        <HArrow $left={4}><Chev d="l" /></HArrow>
        <HThumb $left={17} $w={17} />
        <HArrow $right={5}><Chev d="r" /></HArrow>
      </HScroll>
    </DropArea>
  </RightCol>
);

const Window = ({ shot, tree, rootPad, thumb, hBar, table, scroll, thumbW, arrowRight, active, children }) => (
  <Shot $x={shot.x} $y={shot.y} $w={shot.w} $h={shot.h}>
    <Ribbon $h={shot.strip} $pad={shot.dx + 9}>
      <RibbonCell $w={153} $pad={46}>Number<Launcher><LauncherIcon /></Launcher></RibbonCell>
      <RibbonCell $w={82} $pad={24}>Layout</RibbonCell>
    </Ribbon>
    <Workspace>
      <Band $h={8} $c="#222" />
      <Band $h={19} $c="#a6a6a6" />
      <Band $c="#777" />
      <Band $h={24} $c="#222" />
    </Workspace>
    <SheetTab $w={shot.dx} $top={shot.strip + 10}>3</SheetTab>
    <Stub $w={shot.dx} $top={shot.strip + 47} />
    <Tail $x={shot.dx + 519} $h={shot.tail} />
    <Dialog $x={shot.dx} $y={shot.strip} $active={active}>
      <TitleBar $active={active}>
        <Title>New Table or Matrix</Title>
        <CloseX c={active ? '#222' : '#9a9a9a'} />
      </TitleBar>
      <Heading>
        <DesignTitle>Design a query</DesignTitle>
        <DesignSub>Build a query to specify the data you want from the data source.</DesignSub>
      </Heading>
      <Panel>
        <MainToolbar />
        <Body>
          <ModelPane rows={tree} rootPad={rootPad} thumb={thumb} hBar={hBar} />
          <ResultPane rows={table} scroll={scroll} thumbW={thumbW} arrowRight={arrowRight} />
        </Body>
      </Panel>
      <Footer>
        <Button $w={67}>Help</Button>
        <Button $w={72} $push>&lt; Back</Button>
        <Button $w={73}>Next &gt;</Button>
        <Button $w={73} $ml={4}>Cancel</Button>
      </Footer>
      {children}
    </Dialog>
  </Shot>
);

const POPUP = [
  { t: 'All Sales Territory', cx: 21, gx: 36, tx: 55, exp: true },
  { t: 'Asia', cx: 41, gx: 56, tx: 74 },
  { t: 'Europe', cx: 41, gx: 56, tx: 74 },
  { t: 'North America', cx: 41, gx: 56, tx: 74, on: true },
  { t: 'No Member', cx: 41, gx: 56, tx: 74 },
];

const Arrow = ({ x, y, w, h, d }) => (
  <ArrowMark $x={x} $y={y} width={w} height={h} viewBox={`0 0 ${w} ${h}`}>
    <path d={d} fill="#fff" stroke="#ed1c24" strokeWidth="4.5" strokeLinejoin="round" />
  </ArrowMark>
);

export default function App() {
  return (
    <Page>
      <Global />
      <Window
        shot={{ x: 0, y: 0, w: 928, h: 630, dx: 8, strip: 13, tail: 10 }}
        active tree={TREE_A} rootPad={1} thumb={[19, 79]}
        table={[
          { dim: 'Channel', hier: 'Channel Name', op: 'Equal', filter: '{ Online, Reseller }', bg: '#e9edf1', dotFilter: true },
          { dim: '<Select dimension>' },
        ]}
        thumbW={376} arrowRight={5}
      />
      <Window
        shot={{ x: 1144, y: 360, w: 862, h: 625, dx: 16, strip: 9, tail: 19 }}
        active tree={treeB(true)} rootPad={2} thumb={[70, 53]} hBar
        scroll thumbW={352} arrowRight={21}
        table={[
          { dim: 'Channel', hier: 'Channel Name', op: 'Equal', filter: '{ Online, Reseller }' },
          { dim: 'Sales Territory', hier: 'Sales Territory Group', op: 'Equal', bg: '#e9edf1', dotDim: true },
          { dim: '<Select dimension>' },
        ]}
      >
        <RedBox $x={673} $y={192} $w={118} $h={30} $b={4} />
      </Window>
      <Window
        shot={{ x: 2292, y: 116, w: 928, h: 629, dx: 9, strip: 13, tail: 10 }}
        tree={treeB(false)} rootPad={2} thumb={[70, 53]} hBar
        scroll thumbW={352} arrowRight={21}
        table={[
          { dim: 'Channel', hier: 'Channel Name', op: 'Equal', filter: '{ Online, Reseller }' },
          { dim: 'Sales Territory', hier: 'Sales Territory Group', op: 'Equal', bg: '#a6cdf0', edit: true },
          { dim: '<Select dimension>' },
        ]}
      >
        <Popup>
          <PopupStrip />
          <PopupTree>
            {POPUP.map(r => (
              <PopupRow key={r.t} $exp={r.exp}>
                {r.exp && <Expander $open />}
                <Check $left={r.cx}>{r.on && <Tick />}</Check>
                <IconSlot $left={r.gx}><Globe /></IconSlot>
                <TreeLabel $left={r.tx} $sel={r.on}>{r.t}</TreeLabel>
              </PopupRow>
            ))}
          </PopupTree>
          <PopupBtn $x={63} $w={74} $on>OK</PopupBtn>
          <PopupBtn $x={149} $w={72}>Cancel</PopupBtn>
          <Grip><GripDots /></Grip>
        </Popup>
        <RedBox $x={720} $y={272} $w={139} $h={34} $b={5} />
        <RedBox $x={739} $y={418} $w={91} $h={49} $b={5} />
      </Window>

      <Arrow x={918} y={482} w={206} h={56} d="M2 15 H101 V2 L202 27 L101 52 V39 H2 Z" />
      <Arrow x={2029} y={240} w={224} h={124} d="M2 32 H111 V2 L222 62 L111 122 V90 H2 Z" />

      <Caption $x={301} $y={305} $size={21} $ls={-0.53} $c="#000">
        Expand the Sales Territory dimension icon , and then drag Sales Territory Group to the Hierarchy column !
      </Caption>
      <Caption $x={1482} $y={659} $size={21} $ls={-0.39} $c="#ed1c24">
        Now please click the blank field of the Column &quot;Filter Expression&quot; !
      </Caption>
      <Caption $x={2495} $y={134} $size={21} $ls={-0.3} $c="#ed1c24">
        Now click the Icon &quot;North America&quot; , and then click the Button &quot;OK&quot;!
      </Caption>
    </Page>
  );
}
